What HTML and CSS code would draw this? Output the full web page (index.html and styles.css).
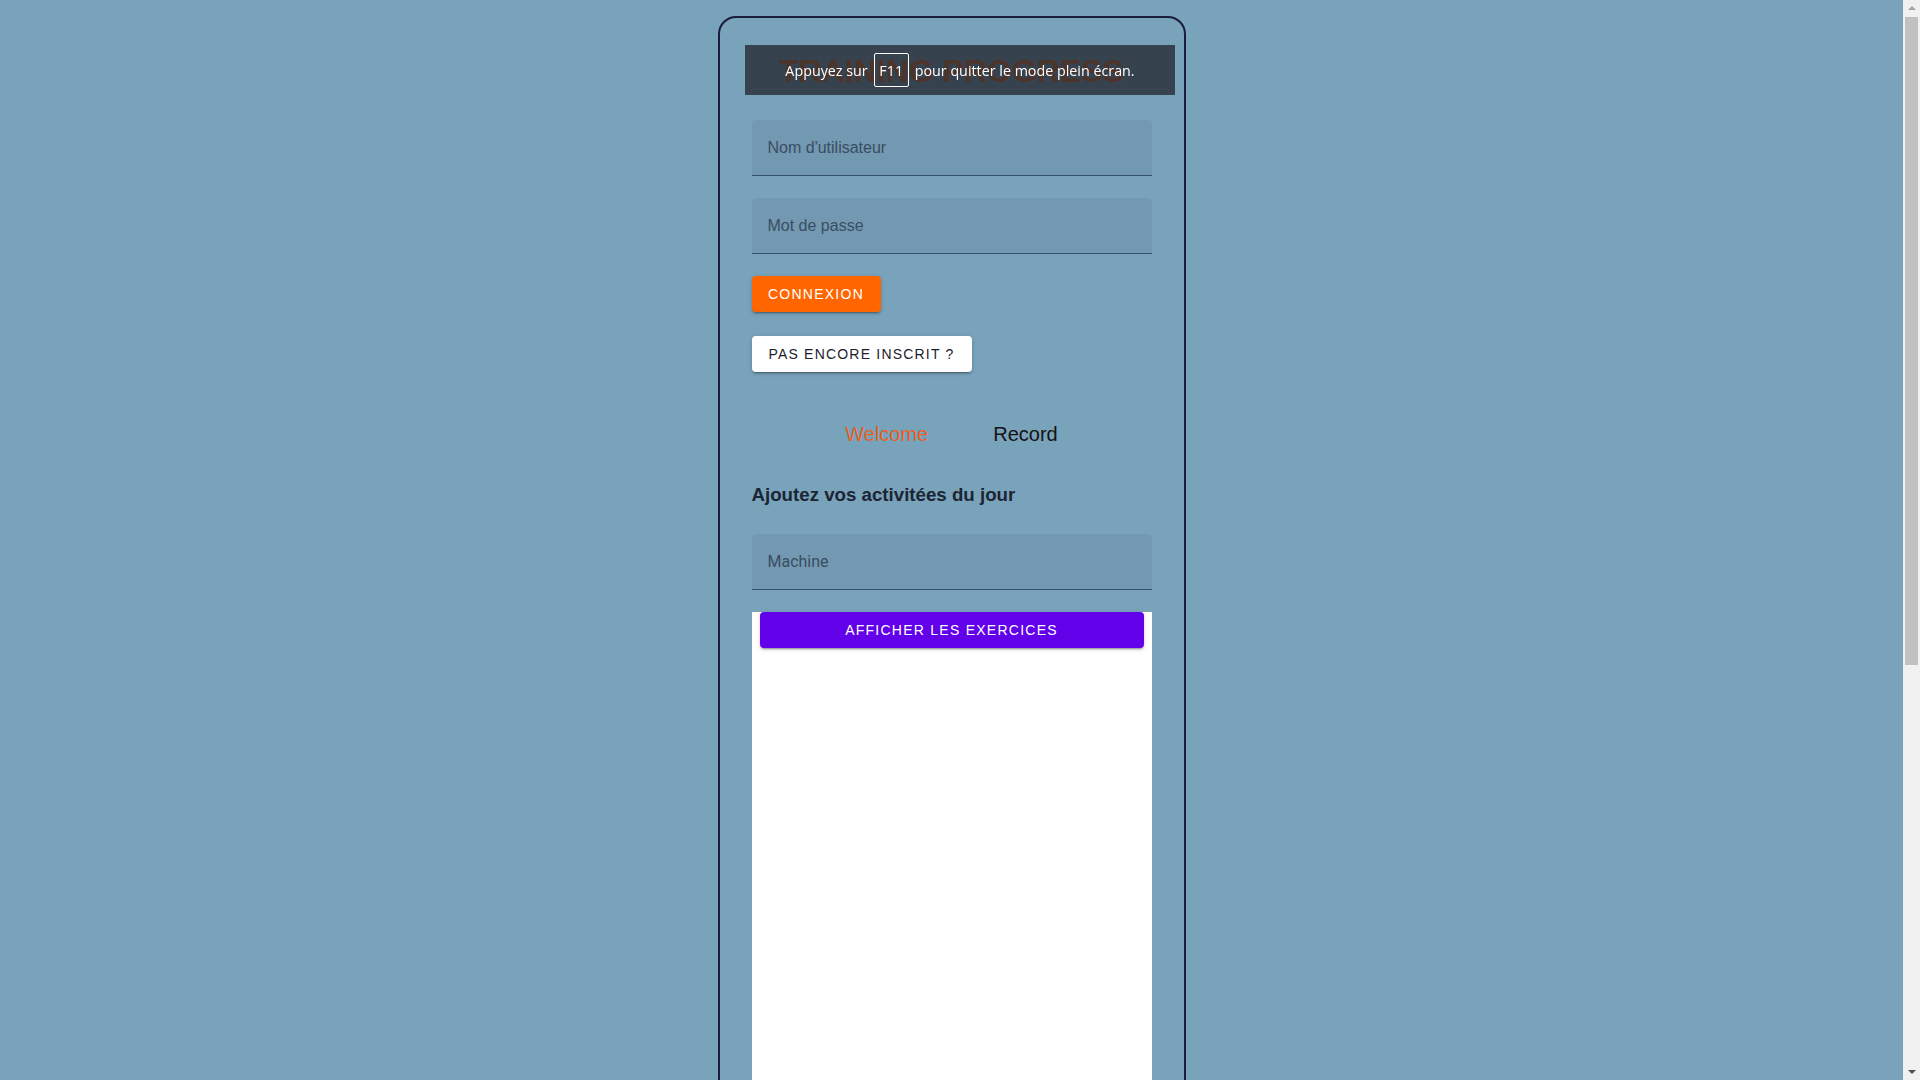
FILE: index.html
```html
<!DOCTYPE html>
<html lang="fr">
<head>
<meta charset="utf-8">
<title>Training Progress</title>
<link rel="stylesheet" href="styles.css">
</head>
<body>
<div class="frame">
  <h1 class="title">TRAINING PROGRESS</h1>
  <div class="field field-user"><span class="label">Nom d'utilisateur</span></div>
  <div class="field field-pass"><span class="label">Mot de passe</span></div>
  <button class="btn btn-login">CONNEXION</button>
  <button class="btn btn-signup">PAS ENCORE INSCRIT ?</button>
  <nav class="tabs">
    <a class="tab tab-active">Welcome</a>
    <a class="tab">Record</a>
  </nav>
  <h2 class="heading">Ajoutez vos activitées du jour</h2>
  <div class="field field-machine"><span class="label label-roboto">Machine</span></div>
  <div class="panel">
    <button class="btn btn-show">AFFICHER LES EXERCICES</button>
  </div>
</div>
<div class="fs-banner">Appuyez sur <span class="key">F11</span> pour quitter le mode plein écran.</div>
<div class="scrollbar">
  <span class="arrow arrow-up"></span>
  <div class="track"><div class="thumb"></div></div>
  <span class="arrow arrow-down"></span>
</div>
</body>
</html>
```
FILE: styles.css
```css
html { background: #79a2bb; }
body {
  margin: 0;
  padding: 16px 17px 16px 0;
  background: #79a2bb;
  font-family: "Liberation Sans", Arial, sans-serif;
}

.frame {
  width: 400px;
  margin: 0 auto;
  border: 2px solid #1b1d3a;
  border-radius: 18px;
  padding: 35px 32px 30px;
  display: flex;
  flex-direction: column;
  align-items: flex-start;
}
.title {
  margin: 0;
  align-self: stretch;
  text-align: center;
  font-size: 32px;
  line-height: 37px;
  font-weight: 700;
  color: #e85a10;
}
.field {
  align-self: stretch;
  height: 55px;
  background: rgba(0, 0, 0, 0.05);
  border-bottom: 1px solid #34506a;
  border-radius: 4px 4px 0 0;
  display: flex;
  align-items: center;
  padding-left: 16px;
}
.field-user { margin-top: 30px; }
.field-pass { margin-top: 22px; }
.field-machine { margin-top: 27px; }
.label {
  font-size: 16px;
  color: #3a4d62;
}
.label-roboto {
  font-family: Roboto, sans-serif;
  font-size: 16px;
}
.btn {
  border: none;
  border-radius: 4px;
  height: 36px;
  padding: 0 16px;
  font-family: "Liberation Sans", Arial, sans-serif;
  font-size: 14px;
  font-weight: 500;
  letter-spacing: 1.25px;
  box-shadow: 0 3px 1px -2px rgba(0,0,0,0.2), 0 2px 2px 0 rgba(0,0,0,0.14), 0 1px 5px 0 rgba(0,0,0,0.12);
}
.btn-login {
  margin-top: 22px;
  width: 129px;
  background: #ff6600;
  color: #fff;
}
.btn-signup {
  margin-top: 24px;
  width: 220px;
  background: #fff;
  color: #1c1c2c;
  letter-spacing: 1.2px;
}
.tabs {
  align-self: stretch;
  margin-top: 51px;
  display: flex;
  justify-content: center;
  gap: 65px;
}
.tab {
  font-size: 20px;
  line-height: 23px;
  color: #141414;
}
.tab-active {
  color: #ff5a1a;
  text-shadow: 0 0 1px rgba(0, 200, 230, 0.9);
}
.heading {
  margin: 37px 0 0;
  font-size: 18.7px;
  line-height: 24px;
  font-weight: 700;
  color: #1c2533;
}
.panel {
  align-self: stretch;
  margin-top: 22px;
  height: 1083px;
  background: #fff;
  padding: 0 8px;
  display: flex;
  flex-direction: column;
}
.btn-show {
  width: 100%;
  background: #6200ea;
  color: #fff;
}
.fs-banner {
  position: fixed;
  left: 745px;
  top: 45px;
  width: 430px;
  height: 50px;
  background: rgba(38, 42, 50, 0.8);
  color: #fff;
  font-family: "Open Sans", "Noto Sans", sans-serif;
  font-size: 14.3px;
  display: flex;
  align-items: center;
  justify-content: center;
}
.key {
  display: inline-flex;
  align-items: center;
  justify-content: center;
  width: 33px;
  height: 32px;
  border: 1px solid #fff;
  border-radius: 2px;
  margin: 0 6px;
}
.scrollbar {
  position: fixed;
  top: 0;
  right: 0;
  width: 17px;
  height: 100vh;
  background: #f1f1f1;
  display: flex;
  flex-direction: column;
  align-items: center;
}
.arrow {
  width: 0;
  height: 0;
  margin: 6px 0;
  border-left: 4px solid transparent;
  border-right: 4px solid transparent;
}
.arrow-up { border-bottom: 4px solid #a3a3a3; margin-bottom: 7px; }
.arrow-down { border-top: 4px solid #505050; margin-top: 7px; }
.track {
  flex: 1;
  width: 100%;
  padding: 0 2px;
  box-sizing: border-box;
}
.thumb {
  height: 648px;
  background: #c1c1c1;
}
```
